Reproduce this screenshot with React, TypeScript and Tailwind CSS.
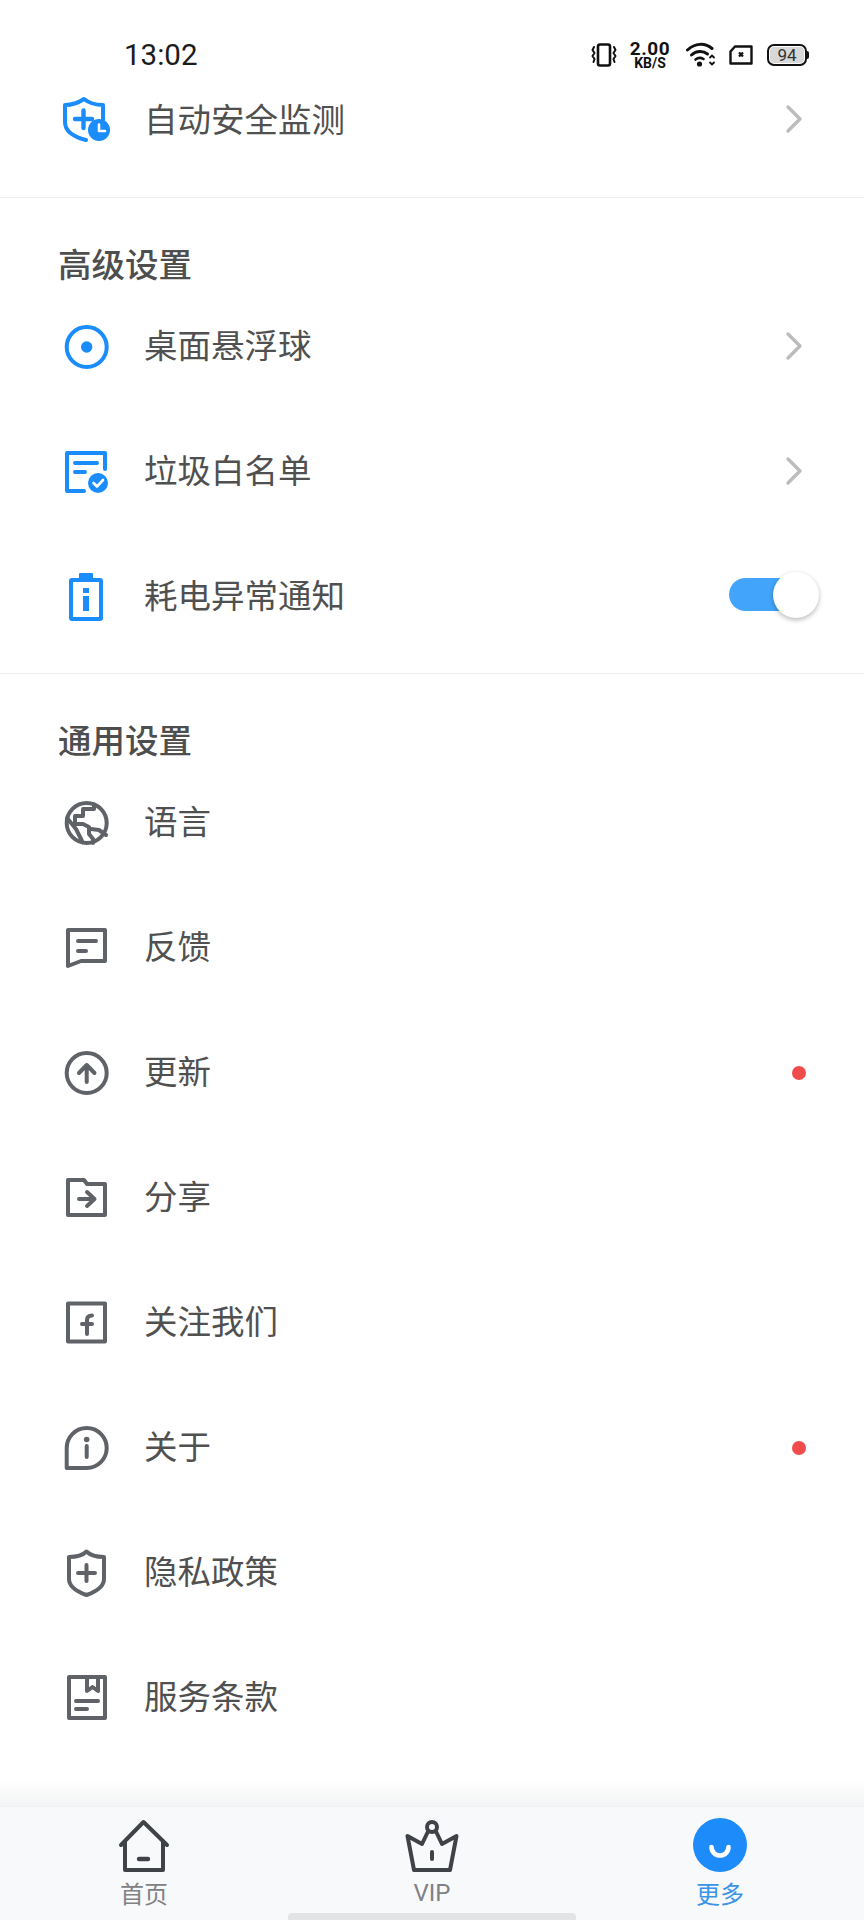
import React from "react";

const BLUE = "#1a8cfb";
const GRAY = "#5f6368";

function Ico({ children }: { children: React.ReactNode }) {
  return (
    <svg width="60" height="60" viewBox="0 0 60 60" fill="none" strokeLinejoin="round" strokeLinecap="round" className="shrink-0">
      {children}
    </svg>
  );
}

function Chevron() {
  return (
    <svg width="18" height="30" viewBox="0 0 18 30" fill="none" className="-mr-[1px] -mt-[2px] shrink-0">
      <path d="M3 3 L15 15 L3 27" stroke="#bcbcbc" strokeWidth="3.4" strokeLinecap="round" strokeLinejoin="round" />
    </svg>
  );
}

function Dot() {
  return <div className="-mr-[4px] h-[14px] w-[14px] rounded-full bg-[#f14c4c]" />;
}

function Toggle() {
  return (
    <div className="relative -mr-[17px] -mt-[4px] flex h-[46px] w-[90px] items-center">
      <div className="h-[33px] w-[70px] rounded-full bg-[#42a5fb]" />
      <div className="absolute right-0 top-0 h-[46px] w-[46px] rounded-full bg-white shadow-[0_2px_5px_rgba(0,0,0,0.28)]" />
    </div>
  );
}

function Row({ icon, label, right, h = "h-[125px]" }: { icon: React.ReactNode; label: string; right?: React.ReactNode; h?: string }) {
  return (
    <div className={`flex ${h} items-center pl-[56px] pr-[62px]`}>
      {icon}
      <span className="ml-[28px] -mt-[5px] flex-1 text-[33.5px] leading-[44px] text-[#505050]">{label}</span>
      {right}
    </div>
  );
}

function Heading({ text }: { text: string }) {
  return <div className="pl-[58px] pt-[45px] pb-[1px] text-[33.5px] font-medium leading-[40px] text-[#4e4e4e]">{text}</div>;
}

const s = { stroke: GRAY, strokeWidth: 4 };
const b = { stroke: BLUE, strokeWidth: 4 };

const icons = {
  shield: (
    <Ico>
      <path d="M47 30 V15 C39 15 33 13 28 9 C22 13 16 15 9 15 V32 C9 41 18 47 30 50" {...b} />
      <path d="M19 29 H36 M27.5 20.5 V38" stroke={BLUE} strokeWidth="4.4" />
      <circle cx="43" cy="40" r="11" fill={BLUE} />
      <path d="M43 34.5 V41 H49" stroke="#fff" strokeWidth="2.6" />
    </Ico>
  ),
  ball: (
    <Ico>
      <circle cx="30.7" cy="30" r="20" {...b} />
      <circle cx="30.7" cy="30" r="5.7" fill={BLUE} />
    </Ico>
  ),
  list: (
    <Ico>
      <path d="M49 27 V11 H11 V49 H28" {...b} />
      <path d="M19 21 H41 M19 30 H29" stroke={BLUE} strokeWidth="4" />
      <circle cx="42" cy="41" r="10" fill={BLUE} />
      <path d="M37.5 41 L41 44.5 L47 38" stroke="#fff" strokeWidth="2.6" />
    </Ico>
  ),
  battery: (
    <Ico>
      <rect x="15" y="13" width="30" height="39" rx="1" {...b} />
      <rect x="23" y="6" width="14" height="6" rx="1" fill={BLUE} />
      <rect x="27" y="21" width="6" height="5" fill={BLUE} />
      <rect x="27" y="29" width="6" height="15" fill={BLUE} />
    </Ico>
  ),
  globe: (
    <Ico>
      <circle cx="30.7" cy="30" r="20" {...s} />
      <path d="M38 12 V16 H27 V23 H19 V31 H27 L33 34 V41 L37 46 V50" {...s} />
      <path d="M11 25 L20 36 L26 48" {...s} />
      <path d="M35 36 L43 37 L50 42" {...s} />
    </Ico>
  ),
  feedback: (
    <Ico>
      <path d="M12 48 V12 H49 V43 H25 Z" {...s} />
      <path d="M22 23 H40 M22 33 H30" {...s} />
    </Ico>
  ),
  update: (
    <Ico>
      <circle cx="30.7" cy="30" r="20" {...s} />
      <path d="M30.7 39 V22 M23 30 L30.7 22 L38.5 30" {...s} />
    </Ico>
  ),
  share: (
    <Ico>
      <path d="M12 47 V12 H28 L31 16 H49 V47 Z" {...s} />
      <path d="M23 31 H38 M31 24 L38.5 31 L31 38" {...s} />
    </Ico>
  ),
  fb: (
    <Ico>
      <rect x="12" y="10.5" width="37" height="38" {...s} />
      <path d="M31 41 V27 C31 24 33 22.5 36 22.5 M26 31 H36" {...s} />
    </Ico>
  ),
  about: (
    <Ico>
      <path d="M10.7 50 V30 A20 20 0 1 1 30.7 50 Z" {...s} />
      <circle cx="30.7" cy="21.5" r="2.8" fill={GRAY} />
      <path d="M30.7 28 V39" {...s} />
    </Ico>
  ),
  privacy: (
    <Ico>
      <path d="M30.5 8.5 C34 12 41 14 48 14 V36 C48 44 39 49 30.5 52 C22 49 13 44 13 36 V14 C20 14 27 12 30.5 8.5 Z" {...s} />
      <path d="M22 30 H39 M30.5 22 V38" {...s} />
    </Ico>
  ),
  terms: (
    <Ico>
      <rect x="13" y="9" width="36" height="41" {...s} />
      <path d="M31 9 V23 L36.5 19 L42 23 V9" {...s} />
      <path d="M20 33 H42 M20 41 H31" {...s} />
    </Ico>
  ),
};

function StatusBar() {
  return (
    <div className="flex h-[72px] items-start pl-[124px] pr-[55px] pt-[38px]">
      <span className="flex-1 font-['Roboto',sans-serif] text-[29.5px] leading-[34px] text-[#1c1c1c]">13:02</span>
      <div className="flex h-[34px] items-center">
        <svg width="26" height="24" viewBox="0 0 26 24" fill="none" stroke="#111" strokeLinecap="round" strokeLinejoin="round">
          <rect x="7" y="1.5" width="12" height="21" rx="2" strokeWidth="2.6" />
          <path d="M3 4 L1.5 7 L3.5 10 L1.5 13 L3.5 16 L2.5 19 M23 4 L24.5 7 L22.5 10 L24.5 13 L22.5 16 L23.5 19" strokeWidth="2" />
        </svg>
        <div className="ml-[13px] flex w-[40px] flex-col items-center font-['Roboto',sans-serif] text-[#111]">
          <span className="text-[19px] font-bold leading-[17px] tracking-[0.6px]">2.00</span>
          <span className="text-[14px] font-bold leading-[13px]">KB/S</span>
        </div>
        <svg width="30" height="26" viewBox="0 0 30 26" fill="none" stroke="#111" className="ml-[16px]" strokeLinecap="round">
          <path d="M1.5 8 C9 1 19 0.5 26 6.5" strokeWidth="3" />
          <path d="M5.5 13 C10.5 8.5 17 8.5 21.5 12" strokeWidth="3" />
          <path d="M9.5 17.5 C12 15.5 15 15.5 17.5 17" strokeWidth="2.6" />
          <circle cx="13.5" cy="22" r="2.6" fill="#111" stroke="none" />
          <path d="M24 15.5 L26 13.5 L28 15.5 M24 20.5 L26 22.5 L28 20.5" strokeWidth="1.8" />
        </svg>
        <svg width="24" height="20" viewBox="0 0 24 20" fill="none" className="ml-[13px]">
          <path d="M6 1.5 H22.5 V18.5 H1.5 V6.5 Z" stroke="#111" strokeWidth="2.4" strokeLinejoin="round" />
          <path d="M10 7.5 L14 11.5 M14 7.5 L10 11.5" stroke="#111" strokeWidth="2.2" />
        </svg>
        <div className="ml-[14px] flex items-center">
          <div className="flex h-[22px] w-[40px] items-center justify-center rounded-[7px] border-[2px] border-[#111] p-[1px]">
            <div className="flex h-full w-full items-center justify-center rounded-[4px] bg-[#d8d8d8] font-['Roboto',sans-serif] text-[17px] leading-none text-[#333]">94</div>
          </div>
          <div className="h-[8px] w-[2px] rounded-r-sm bg-[#111]" />
        </div>
      </div>
    </div>
  );
}

function NavItem({ icon, label, color, mono }: { icon: React.ReactNode; label: string; color: string; mono?: boolean }) {
  return (
    <div className="flex flex-col items-center">
      {icon}
      <span className={`mt-[2px] text-[24px] leading-[32px] ${color} ${mono ? "font-['Roboto',sans-serif]" : ""}`}>{label}</span>
    </div>
  );
}

export default function App() {
  return (
    <div className="flex h-[1920px] w-[864px] flex-col overflow-hidden bg-white font-['Noto_Sans_CJK_SC','Noto_Sans',sans-serif]">
      <StatusBar />
      <div className="flex-1">
        <Row h="h-[96px]" icon={icons.shield} label="自动安全监测" right={<Chevron />} />
        <div className="mt-[29px] h-px bg-[#eeeeee]" />
        <Heading text="高级设置" />
        <Row icon={icons.ball} label="桌面悬浮球" right={<Chevron />} />
        <Row icon={icons.list} label="垃圾白名单" right={<Chevron />} />
        <Row icon={icons.battery} label="耗电异常通知" right={<Toggle />} />
        <div className="mt-[14px] h-px bg-[#eeeeee]" />
        <Heading text="通用设置" />
        <Row icon={icons.globe} label="语言" />
        <Row icon={icons.feedback} label="反馈" />
        <Row icon={icons.update} label="更新" right={<Dot />} />
        <Row icon={icons.share} label="分享" />
        <Row icon={icons.fb} label="关注我们" />
        <Row icon={icons.about} label="关于" right={<Dot />} />
        <Row icon={icons.privacy} label="隐私政策" />
        <Row icon={icons.terms} label="服务条款" />
      </div>
      <div className="h-[26px] bg-linear-to-b from-white to-[#f3f4f5]" />
      <div className="flex h-[114px] flex-col border-t border-[#f0f1f2] bg-[#f8f9fb]">
        <div className="grid grid-cols-3 pt-[8px]">
          <NavItem
            label="首页"
            color="text-[#7f8184]"
            icon={
              <svg width="60" height="60" viewBox="0 0 60 60" fill="none" stroke="#3f4246" strokeWidth="4" strokeLinecap="round" strokeLinejoin="round">
                <path d="M7 30 L29.5 7 L53 30 M11 26 V55 H49 V26" />
                <path d="M25 44 H34" strokeWidth="4.4" />
              </svg>
            }
          />
          <NavItem
            label="VIP"
            color="text-[#7f8184]"
            mono
            icon={
              <svg width="60" height="60" viewBox="0 0 60 60" fill="none" stroke="#3f4246" strokeWidth="4" strokeLinecap="round" strokeLinejoin="round">
                <circle cx="30" cy="12" r="5" />
                <path d="M26 16.5 L20 29 L5.5 21 L12 55 H48 L54.5 21 L40 29 L34 16.5" />
                <path d="M30 37 V44" />
              </svg>
            }
          />
          <NavItem
            label="更多"
            color="text-[#3a94e8]"
            icon={
              <svg width="60" height="60" viewBox="0 0 60 60" fill="none">
                <circle cx="30" cy="30" r="27" fill="#1e8bfb" />
                <path d="M21.5 32 A8.5 8.5 0 0 0 38.5 32" stroke="#fff" strokeWidth="4.6" strokeLinecap="round" />
              </svg>
            }
          />
        </div>
        <div className="mx-auto mt-auto h-[7px] w-[288px] rounded-t-[4px] bg-[#e3e4e6]" />
      </div>
    </div>
  );
}
